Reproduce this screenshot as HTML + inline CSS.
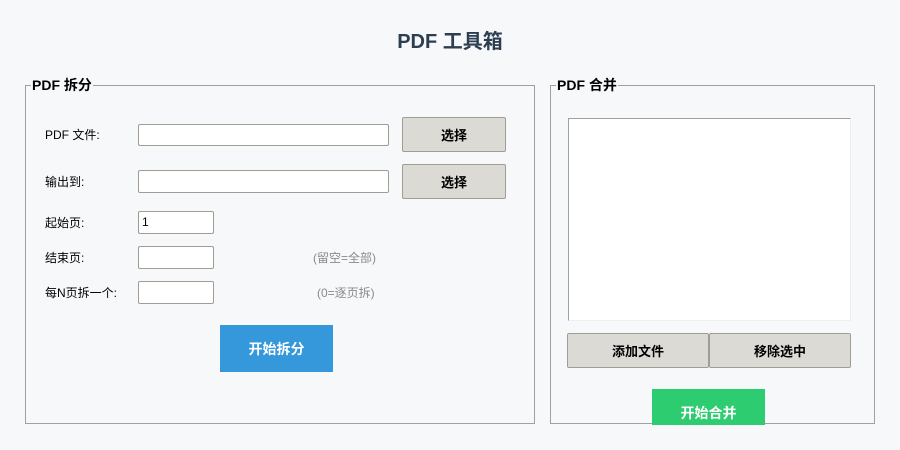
<!DOCTYPE html>
<html><head><meta charset="utf-8"><style>
*{margin:0;padding:0;box-sizing:border-box}
body{width:900px;height:450px;background:#f7f8fa;position:relative;overflow:hidden;font-family:"Liberation Sans","Noto Sans CJK SC",sans-serif;font-size:12px;color:#000}
.a{position:absolute}
.grp{position:absolute;border:1px solid #a0a0a0}
.leg{position:absolute;background:#f7f8fa;font-weight:bold;font-size:14px;line-height:16px;padding:0 1px}
.in{position:absolute;background:#fff;border:1px solid #a09c96;border-radius:2px;font-size:12px;line-height:20px;padding-left:3px}
.btn{position:absolute;background:#dcdad5;border:1px solid #a09c96;border-radius:2px;font-weight:bold;font-size:13px;display:flex;align-items:center;justify-content:center}
.lbl{position:absolute;font-size:12px;line-height:14px}
.hint{position:absolute;font-size:12px;color:#8a8a8a;line-height:14px}
.cb{position:absolute;color:#fff;font-weight:bold;font-size:14px;display:flex;align-items:center;justify-content:center}
</style></head><body>
<div class="a" style="left:0;width:900px;top:31px;text-align:center;font-size:20px;font-weight:bold;color:#2c3e50;line-height:22px">PDF 工具箱</div>

<div class="grp" style="left:25px;top:85px;width:510px;height:339px"></div>
<div class="leg" style="left:31px;top:77px">PDF 拆分</div>
<div class="lbl" style="left:45px;top:128px">PDF 文件:</div>
<div class="in" style="left:138px;top:124px;width:251px;height:22px"></div>
<div class="btn" style="left:402px;top:117px;width:104px;height:35px">选择</div>
<div class="lbl" style="left:45px;top:175px">输出到:</div>
<div class="in" style="left:138px;top:170px;width:251px;height:23px"></div>
<div class="btn" style="left:402px;top:164px;width:104px;height:35px">选择</div>
<div class="lbl" style="left:45px;top:216px">起始页:</div>
<div class="in" style="left:138px;top:211px;width:76px;height:23px">1</div>
<div class="lbl" style="left:45px;top:251px">结束页:</div>
<div class="in" style="left:138px;top:246px;width:76px;height:23px"></div>
<div class="hint" style="left:313px;top:251px">(留空=全部)</div>
<div class="lbl" style="left:45px;top:286px">每N页拆一个:</div>
<div class="in" style="left:138px;top:281px;width:76px;height:23px"></div>
<div class="hint" style="left:317px;top:286px">(0=逐页拆)</div>
<div class="cb" style="left:220px;top:325px;width:113px;height:47px;background:#3498db">开始拆分</div>

<div class="grp" style="left:550px;top:85px;width:325px;height:339px"></div>
<div class="leg" style="left:556px;top:77px">PDF 合并</div>
<div class="a" style="left:568px;top:118px;width:283px;height:203px;background:#fff;border-top:1px solid #a0a0a0;border-left:1px solid #a0a0a0;border-right:1px solid #eee;border-bottom:1px solid #eee"></div>
<div class="btn" style="left:567px;top:333px;width:142px;height:35px">添加文件</div>
<div class="btn" style="left:709px;top:333px;width:142px;height:35px">移除选中</div>
<div class="cb" style="left:652px;top:389px;width:113px;height:36px;background:#2ecc71;padding-top:12px">开始合并</div>
</body></html>
